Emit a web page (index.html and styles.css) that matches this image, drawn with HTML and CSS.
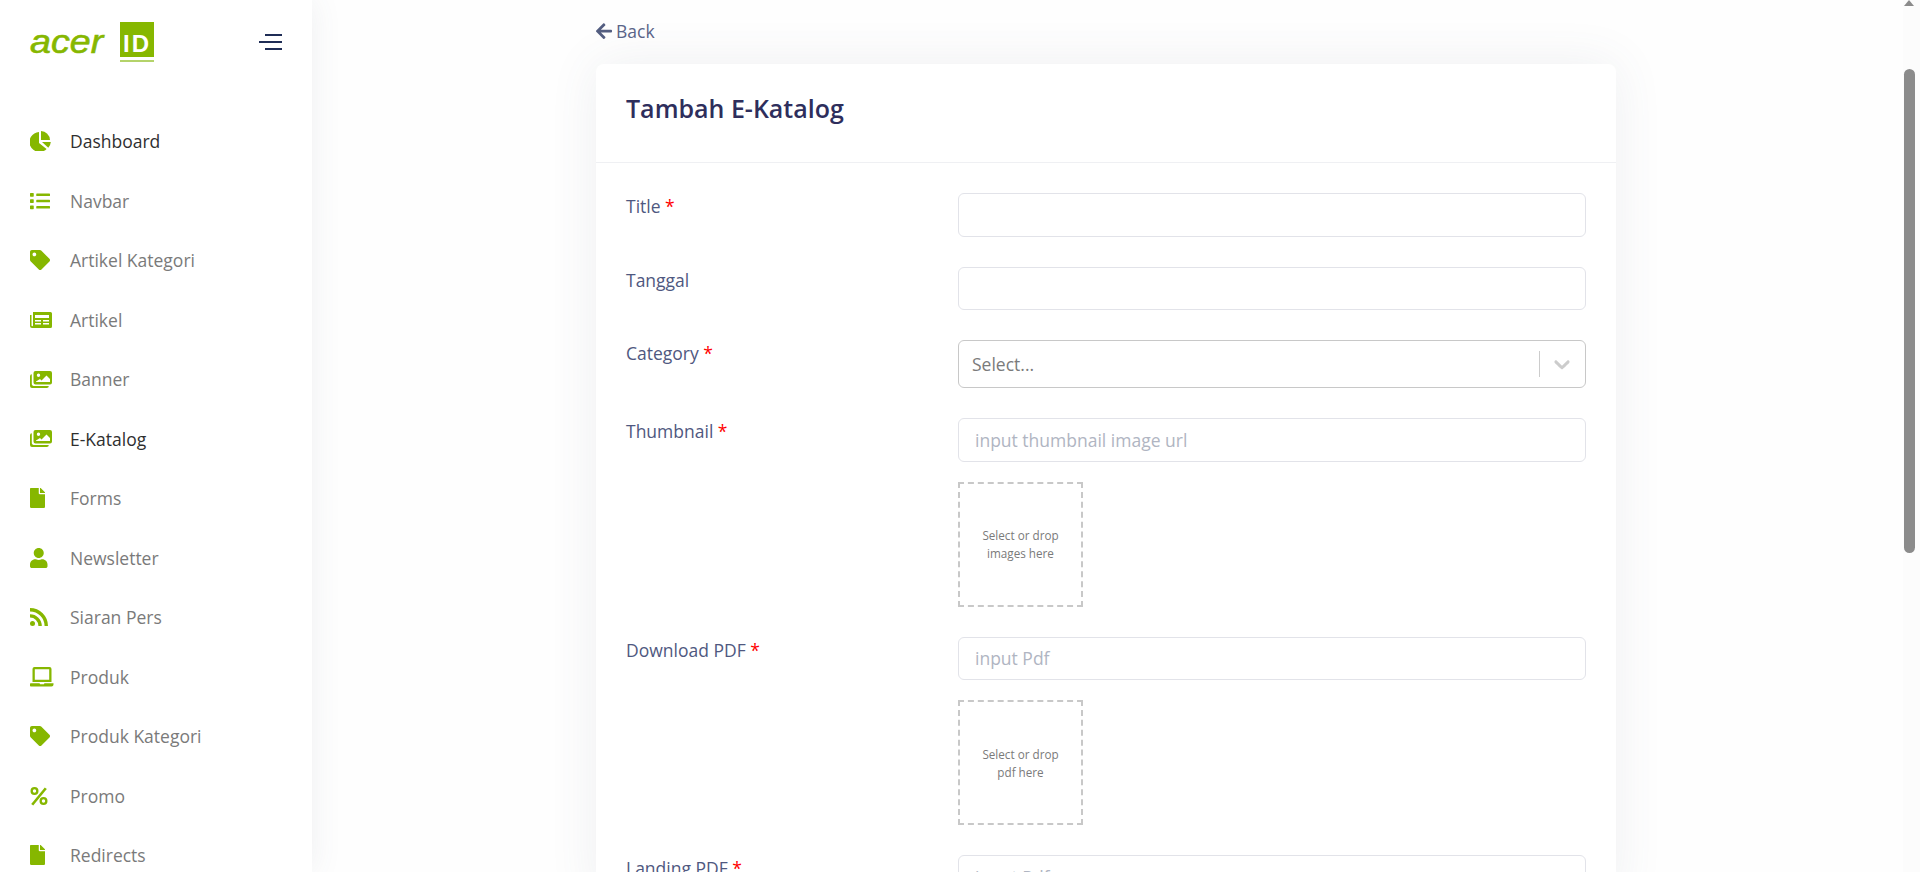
FILE: index.html
```html
<!DOCTYPE html>
<html lang="id">
<head>
    <meta charset="UTF-8">
    <meta name="viewport" content="width=device-width, initial-scale=1.0">
    <title>Tambah E-Katalog</title>
    <link rel="stylesheet" href="styles.css">
</head>
<body>
    <div class="app">
        <!-- Sidebar -->
        <aside class="sidebar">
            <div class="brand">
                <div class="logo">
                    <span class="logo-acer">acer</span>
                    <span class="logo-id">ID</span>
                </div>
                <button class="toggle" type="button" aria-label="Menu">
                    <span></span><span class="long"></span><span></span>
                </button>
            </div>
            <nav class="menu">
                <a class="menu-item active"><span class="menu-icon"><svg width="21" height="20" viewBox="0 0 21 20"><path d="M9 1v11l7.6 6A10 10 0 1 1 9 1z"/><path d="M11 0a9.500 9.500 0 0 1 9 9h-9z"/><path d="M12 11h8.800a9.500 9.500 0 0 1-2.500 5.700z"/></svg></span>Dashboard</a>
                <a class="menu-item"><span class="menu-icon"><svg width="20" height="20" viewBox="0 0 512 512"><path d="M80 368H16a16 16 0 0 0-16 16v64a16 16 0 0 0 16 16h64a16 16 0 0 0 16-16v-64a16 16 0 0 0-16-16zm0-320H16A16 16 0 0 0 0 64v64a16 16 0 0 0 16 16h64a16 16 0 0 0 16-16V64a16 16 0 0 0-16-16zm0 160H16a16 16 0 0 0-16 16v64a16 16 0 0 0 16 16h64a16 16 0 0 0 16-16v-64a16 16 0 0 0-16-16zm416 176H176a16 16 0 0 0-16 16v32a16 16 0 0 0 16 16h320a16 16 0 0 0 16-16v-32a16 16 0 0 0-16-16zm0-320H176a16 16 0 0 0-16 16v32a16 16 0 0 0 16 16h320a16 16 0 0 0 16-16V80a16 16 0 0 0-16-16zm0 160H176a16 16 0 0 0-16 16v32a16 16 0 0 0 16 16h320a16 16 0 0 0 16-16v-32a16 16 0 0 0-16-16z"/></svg></span>Navbar</a>
                <a class="menu-item"><span class="menu-icon"><svg width="20" height="20" viewBox="0 0 512 512"><path d="M0 252.118V48C0 21.49 21.49 0 48 0h204.118a48 48 0 0 1 33.941 14.059l211.882 211.882c18.745 18.745 18.745 49.137 0 67.882L293.823 497.941c-18.745 18.745-49.137 18.745-67.882 0L14.059 286.059A48 48 0 0 1 0 252.118zM112 64c-26.51 0-48 21.49-48 48s21.490 48 48 48 48-21.490 48-48-21.490-48-48-48z"/></svg></span>Artikel Kategori</a>
                <a class="menu-item"><span class="menu-icon"><svg width="22" height="16" viewBox="0 0 22 16"><path fill-rule="evenodd" d="M3 0h17.500A1.500 1.500 0 0 1 22 1.500v13a1.500 1.500 0 0 1-1.500 1.500H2a2 2 0 0 1-2-2V3h1.500v10.500a.7.700 0 0 0 1.500 0zM5 3v3h14V3zm0 5v1.500h6V8zm8 0v1.500h6V8zm-8 3v1.500h6V11zm8 0v1.500h6V11z"/></svg></span>Artikel</a>
                <a class="menu-item"><span class="menu-icon"><svg width="22" height="17" viewBox="0 0 22 17"><path fill-rule="evenodd" d="M5.500 0h14.500A2 2 0 0 1 22 2v9.500a2 2 0 0 1-2 2H5.500a2 2 0 0 1-2-2V2a2 2 0 0 1 2-2zM8.500 2.600a1.700 1.700 0 1 0 0 3.400 1.700 1.700 0 0 0 0-3.400zM6 11h14V8l-3.500-3.500-5 5-1.500-1.500L6 10.500z"/><path d="M1.800 3.300v9.700c0 1 .8 1.900 1.900 1.900h15.100v.1a2 2 0 0 1-2 2H2a2 2 0 0 1-2-2V5.300a2 2 0 0 1 1.800-2z"/></svg></span>Banner</a>
                <a class="menu-item active"><span class="menu-icon"><svg width="22" height="17" viewBox="0 0 22 17"><path fill-rule="evenodd" d="M5.500 0h14.500A2 2 0 0 1 22 2v9.500a2 2 0 0 1-2 2H5.500a2 2 0 0 1-2-2V2a2 2 0 0 1 2-2zM8.500 2.600a1.700 1.700 0 1 0 0 3.400 1.700 1.700 0 0 0 0-3.400zM6 11h14V8l-3.500-3.500-5 5-1.500-1.500L6 10.500z"/><path d="M1.800 3.300v9.700c0 1 .8 1.900 1.900 1.900h15.100v.1a2 2 0 0 1-2 2H2a2 2 0 0 1-2-2V5.300a2 2 0 0 1 1.800-2z"/></svg></span>E-Katalog</a>
                <a class="menu-item"><span class="menu-icon"><svg width="15" height="20" viewBox="0 0 384 512"><path d="M224 136V0H24C10.700 0 0 10.700 0 24v464c0 13.300 10.700 24 24 24h336c13.300 0 24-10.700 24-24V160H248c-13.200 0-24-10.800-24-24zm160-14.100v6.100H256V0h6.100c6.400 0 12.500 2.500 17 7l97.900 98c4.500 4.500 7 10.600 7 16.900z"/></svg></span>Forms</a>
                <a class="menu-item"><span class="menu-icon"><svg width="17.500" height="20" viewBox="0 0 448 512"><path d="M224 256c70.700 0 128-57.300 128-128S294.700 0 224 0 96 57.300 96 128s57.300 128 128 128zm89.600 32h-16.700c-22.200 10.200-46.900 16-72.900 16s-50.600-5.800-72.900-16h-16.700C60.200 288 0 348.200 0 422.400V464c0 26.500 21.500 48 48 48h352c26.500 0 48-21.500 48-48v-41.600c0-74.200-60.200-134.400-134.400-134.400z"/></svg></span>Newsletter</a>
                <a class="menu-item"><span class="menu-icon"><svg width="18" height="18" viewBox="0 0 18 18"><circle cx="2.500" cy="15.500" r="2.500"/><path d="M0 6.200v3.400a8.400 8.400 0 0 1 8.400 8.400h3.400A11.800 11.800 0 0 0 0 6.200z"/><path d="M0 0v3.400A14.600 14.600 0 0 1 14.600 18H18A18 18 0 0 0 0 0z"/></svg></span>Siaran Pers</a>
                <a class="menu-item"><span class="menu-icon"><svg width="24" height="20" viewBox="0 0 24 20"><path fill-rule="evenodd" d="M4.500 0h15A2 2 0 0 1 21.500 2v13h-19V2a2 2 0 0 1 2-2zM4.800 2.200v10.600h14.400V2.200z"/><path d="M.5 16.200h9l.7 1h3.600l.7-1h9v1.300a2 2 0 0 1-2 2h-20a2 2 0 0 1-2-2z"/></svg></span>Produk</a>
                <a class="menu-item"><span class="menu-icon"><svg width="20" height="20" viewBox="0 0 512 512"><path d="M0 252.118V48C0 21.49 21.49 0 48 0h204.118a48 48 0 0 1 33.941 14.059l211.882 211.882c18.745 18.745 18.745 49.137 0 67.882L293.823 497.941c-18.745 18.745-49.137 18.745-67.882 0L14.059 286.059A48 48 0 0 1 0 252.118zM112 64c-26.51 0-48 21.49-48 48s21.490 48 48 48 48-21.490 48-48-21.490-48-48-48z"/></svg></span>Produk Kategori</a>
                <a class="menu-item"><span class="menu-icon"><svg width="18" height="20" viewBox="0 0 18 20"><path fill-rule="evenodd" d="M4.500 1a4 4 0 1 1 0 8 4 4 0 0 1 0-8zm0 2.300a1.700 1.700 0 1 0 0 3.400 1.700 1.700 0 0 0 0-3.400zM13.500 11a4 4 0 1 1 0 8 4 4 0 0 1 0-8zm0 2.300a1.700 1.700 0 1 0 0 3.400 1.700 1.700 0 0 0 0-3.400z"/><path d="M14.800 1.500l2 1.400L3.200 19.500l-2-1.400z"/></svg></span>Promo</a>
                <a class="menu-item"><span class="menu-icon"><svg width="15" height="20" viewBox="0 0 384 512"><path d="M224 136V0H24C10.700 0 0 10.700 0 24v464c0 13.300 10.700 24 24 24h336c13.300 0 24-10.700 24-24V160H248c-13.200 0-24-10.800-24-24zm160-14.100v6.100H256V0h6.100c6.400 0 12.500 2.500 17 7l97.900 98c4.500 4.500 7 10.600 7 16.900z"/></svg></span>Redirects</a>
            </nav>
        </aside>

        <!-- Isi halaman -->
        <main class="content">
            <a class="back"><svg width="16" height="18.300" viewBox="0 0 448 512"><path d="M257.500 445.100l-22.200 22.200c-9.400 9.400-24.600 9.400-33.900 0L7 273c-9.400-9.400-9.400-24.600 0-33.900L201.400 44.700c9.400-9.400 24.600-9.400 33.900 0l22.200 22.200c9.500 9.500 9.300 25-.4 34.300L136.600 216H424c13.300 0 24 10.700 24 24v32c0 13.300-10.700 24-24 24H136.600l120.500 114.800c9.800 9.300 10 24.800.4 34.300z"/></svg>Back</a>

            <section class="card">
                <header class="card-header">
                    <h1>Tambah E-Katalog</h1>
                </header>
                <form class="card-body">
                    <div class="form-row">
                        <label>Title <span class="req">*</span></label>
                        <div class="field"><input type="text" class="input"></div>
                    </div>
                    <div class="form-row">
                        <label>Tanggal</label>
                        <div class="field"><input type="text" class="input"></div>
                    </div>
                    <div class="form-row">
                        <label>Category <span class="req">*</span></label>
                        <div class="field">
                            <div class="select">
                                <span class="select-value">Select...</span>
                                <span class="select-sep"></span>
                                <svg class="select-arrow" width="26" height="26" viewBox="0 0 20 20"><path d="M4.516 7.548c.436-.446 1.043-.481 1.576 0L10 11.295l3.908-3.747c.533-.481 1.141-.446 1.574 0 .436.445.408 1.197 0 1.615-.406.418-4.695 4.502-4.695 4.502a1.095 1.095 0 0 1-1.576 0S4.924 9.581 4.516 9.163c-.409-.418-.436-1.170 0-1.615z"/></svg>
                            </div>
                        </div>
                    </div>
                    <div class="form-row">
                        <label>Thumbnail <span class="req">*</span></label>
                        <div class="field">
                            <input type="text" class="input" placeholder="input thumbnail image url">
                            <div class="dropzone">Select or drop<br>images here</div>
                        </div>
                    </div>
                    <div class="form-row">
                        <label>Download PDF <span class="req">*</span></label>
                        <div class="field">
                            <input type="text" class="input" placeholder="input Pdf">
                            <div class="dropzone">Select or drop<br>pdf here</div>
                        </div>
                    </div>
                    <div class="form-row">
                        <label>Landing PDF <span class="req">*</span></label>
                        <div class="field">
                            <input type="text" class="input" placeholder="input Pdf">
                        </div>
                    </div>
                </form>
            </section>
        </main>

        <!-- Scrollbar halaman -->
        <div class="scrollbar">
            <span class="scroll-up"></span>
            <span class="scroll-thumb"></span>
        </div>
    </div>
</body>
</html>
```

FILE: styles.css
```css
* {
    box-sizing: border-box;
}
html, body {
    height: 100%;
    margin: 0;
    overflow: hidden;
}
body {
    font-family: "Open Sans", sans-serif;
    font-size: 16px;
    background-color: #fefefe;
    color: #4f5880;
}
.app {
    display: flex;
    height: 872px;
    overflow: hidden;
    position: relative;
}

/* Sidebar */
.sidebar {
    width: 312px;
    flex: none;
    background: #fff;
    padding: 22px 30px 0;
    box-shadow: 0 0 30px rgba(82, 90, 110, 0.09);
    position: relative;
    z-index: 1;
}
.brand {
    display: flex;
    align-items: flex-start;
    justify-content: space-between;
    height: 89.5px;
}
.logo {
    display: flex;
    align-items: flex-start;
}
.logo-acer {
    width: 90px;
    color: #86b700;
    font-family: "Liberation Sans", sans-serif;
    font-style: italic;
    font-weight: 400;
    font-size: 33px;
    line-height: 30px;
    margin-top: 5px;
    -webkit-text-stroke: 0.6px #86b700;
    transform: scaleX(1.14);
    transform-origin: left center;
}
.logo-id {
    width: 34px;
    height: 35px;
    background: #86b700;
    box-shadow: 0 3px 0 #fff, 0 5px 0 #b4d36a;
    color: #fff;
    font-family: "Liberation Sans", sans-serif;
    font-weight: 700;
    font-size: 24px;
    line-height: 43px;
    letter-spacing: 2px;
    text-align: center;
}
.toggle {
    width: 23px;
    margin: 12px 0 0;
    padding: 0;
    border: none;
    background: none;
    display: flex;
    flex-direction: column;
    align-items: flex-end;
    gap: 5px;
}
.toggle span {
    display: block;
    width: 17px;
    height: 2px;
    background: #1f2d56;
}
.toggle .long {
    width: 23px;
}
.menu {
    display: flex;
    flex-direction: column;
}
.menu-item {
    display: flex;
    align-items: center;
    height: 59.5px;
    color: #7a7a7a;
    font-size: 17.5px;
}
.menu-item.active {
    color: #2f2f2f;
}
.menu-icon {
    width: 40px;
    flex: none;
    display: flex;
    align-items: center;
}
.menu-icon svg {
    fill: #86b700;
    display: block;
}

/* Isi halaman */
.content {
    flex: 1;
    padding: 19px 304px 0 284px;
}
.back {
    display: flex;
    align-items: center;
    gap: 4px;
    height: 24px;
    font-size: 17.5px;
    color: #5a6488;
}
.back svg {
    fill: #535d80;
}
.card {
    margin-top: 21px;
    width: 1020px;
    background: #fff;
    border-radius: 8px;
    box-shadow: 0 0 50px rgba(82, 90, 110, 0.09);
}
.card-header {
    height: 99px;
    padding: 0 30px 10px;
    display: flex;
    align-items: center;
    border-bottom: 1px solid #eff0f3;
}
.card-header h1 {
    margin: 0;
    font-size: 25px;
    font-weight: 600;
    color: #2e2e5c;
}
.card-body {
    padding: 30px 30px 0;
}
.form-row {
    display: grid;
    grid-template-columns: 332px 628px;
    margin-bottom: 30px;
}
.form-row label {
    font-size: 17.5px;
    line-height: 26px;
}
.req {
    color: #f00;
}
.input {
    display: block;
    width: 100%;
    height: 43.5px;
    padding: 0 16px;
    border: 1px solid #e2e3e9;
    border-radius: 6px;
    background: #fff;
    font-family: inherit;
    font-size: 17.5px;
    color: #4f5880;
    outline: none;
}
.input::placeholder {
    color: #b0b5c2;
}
.select {
    display: flex;
    align-items: center;
    height: 48px;
    padding: 0 10px 0 13px;
    border: 1px solid #c8c8c8;
    border-radius: 6px;
}
.select-value {
    flex: 1;
    font-size: 17.5px;
    color: #7b7b7b;
}
.select-sep {
    width: 1px;
    height: 26px;
    background: #ccc;
    margin-right: 9px;
}
.select-arrow {
    fill: #ccc;
}
.dropzone {
    width: 125px;
    height: 125px;
    margin-top: 20px;
    border: 2px dashed #c8c8c8;
    display: flex;
    align-items: center;
    justify-content: center;
    text-align: center;
    font-size: 11.7px;
    line-height: 18px;
    color: #7a7a7a;
}

/* Scrollbar */
.scrollbar {
    position: absolute;
    top: 0;
    right: 0;
    width: 17px;
    height: 100%;
    background: #fcfcfc;
}
.scroll-up {
    position: absolute;
    top: 0;
    left: 1px;
    border-left: 5.5px solid transparent;
    border-right: 5.5px solid transparent;
    border-bottom: 6px solid #8b8b8b;
}
.scroll-thumb {
    position: absolute;
    top: 69px;
    left: 1px;
    width: 11px;
    height: 484px;
    border-radius: 6px;
    background: #8b8b8b;
}
```
